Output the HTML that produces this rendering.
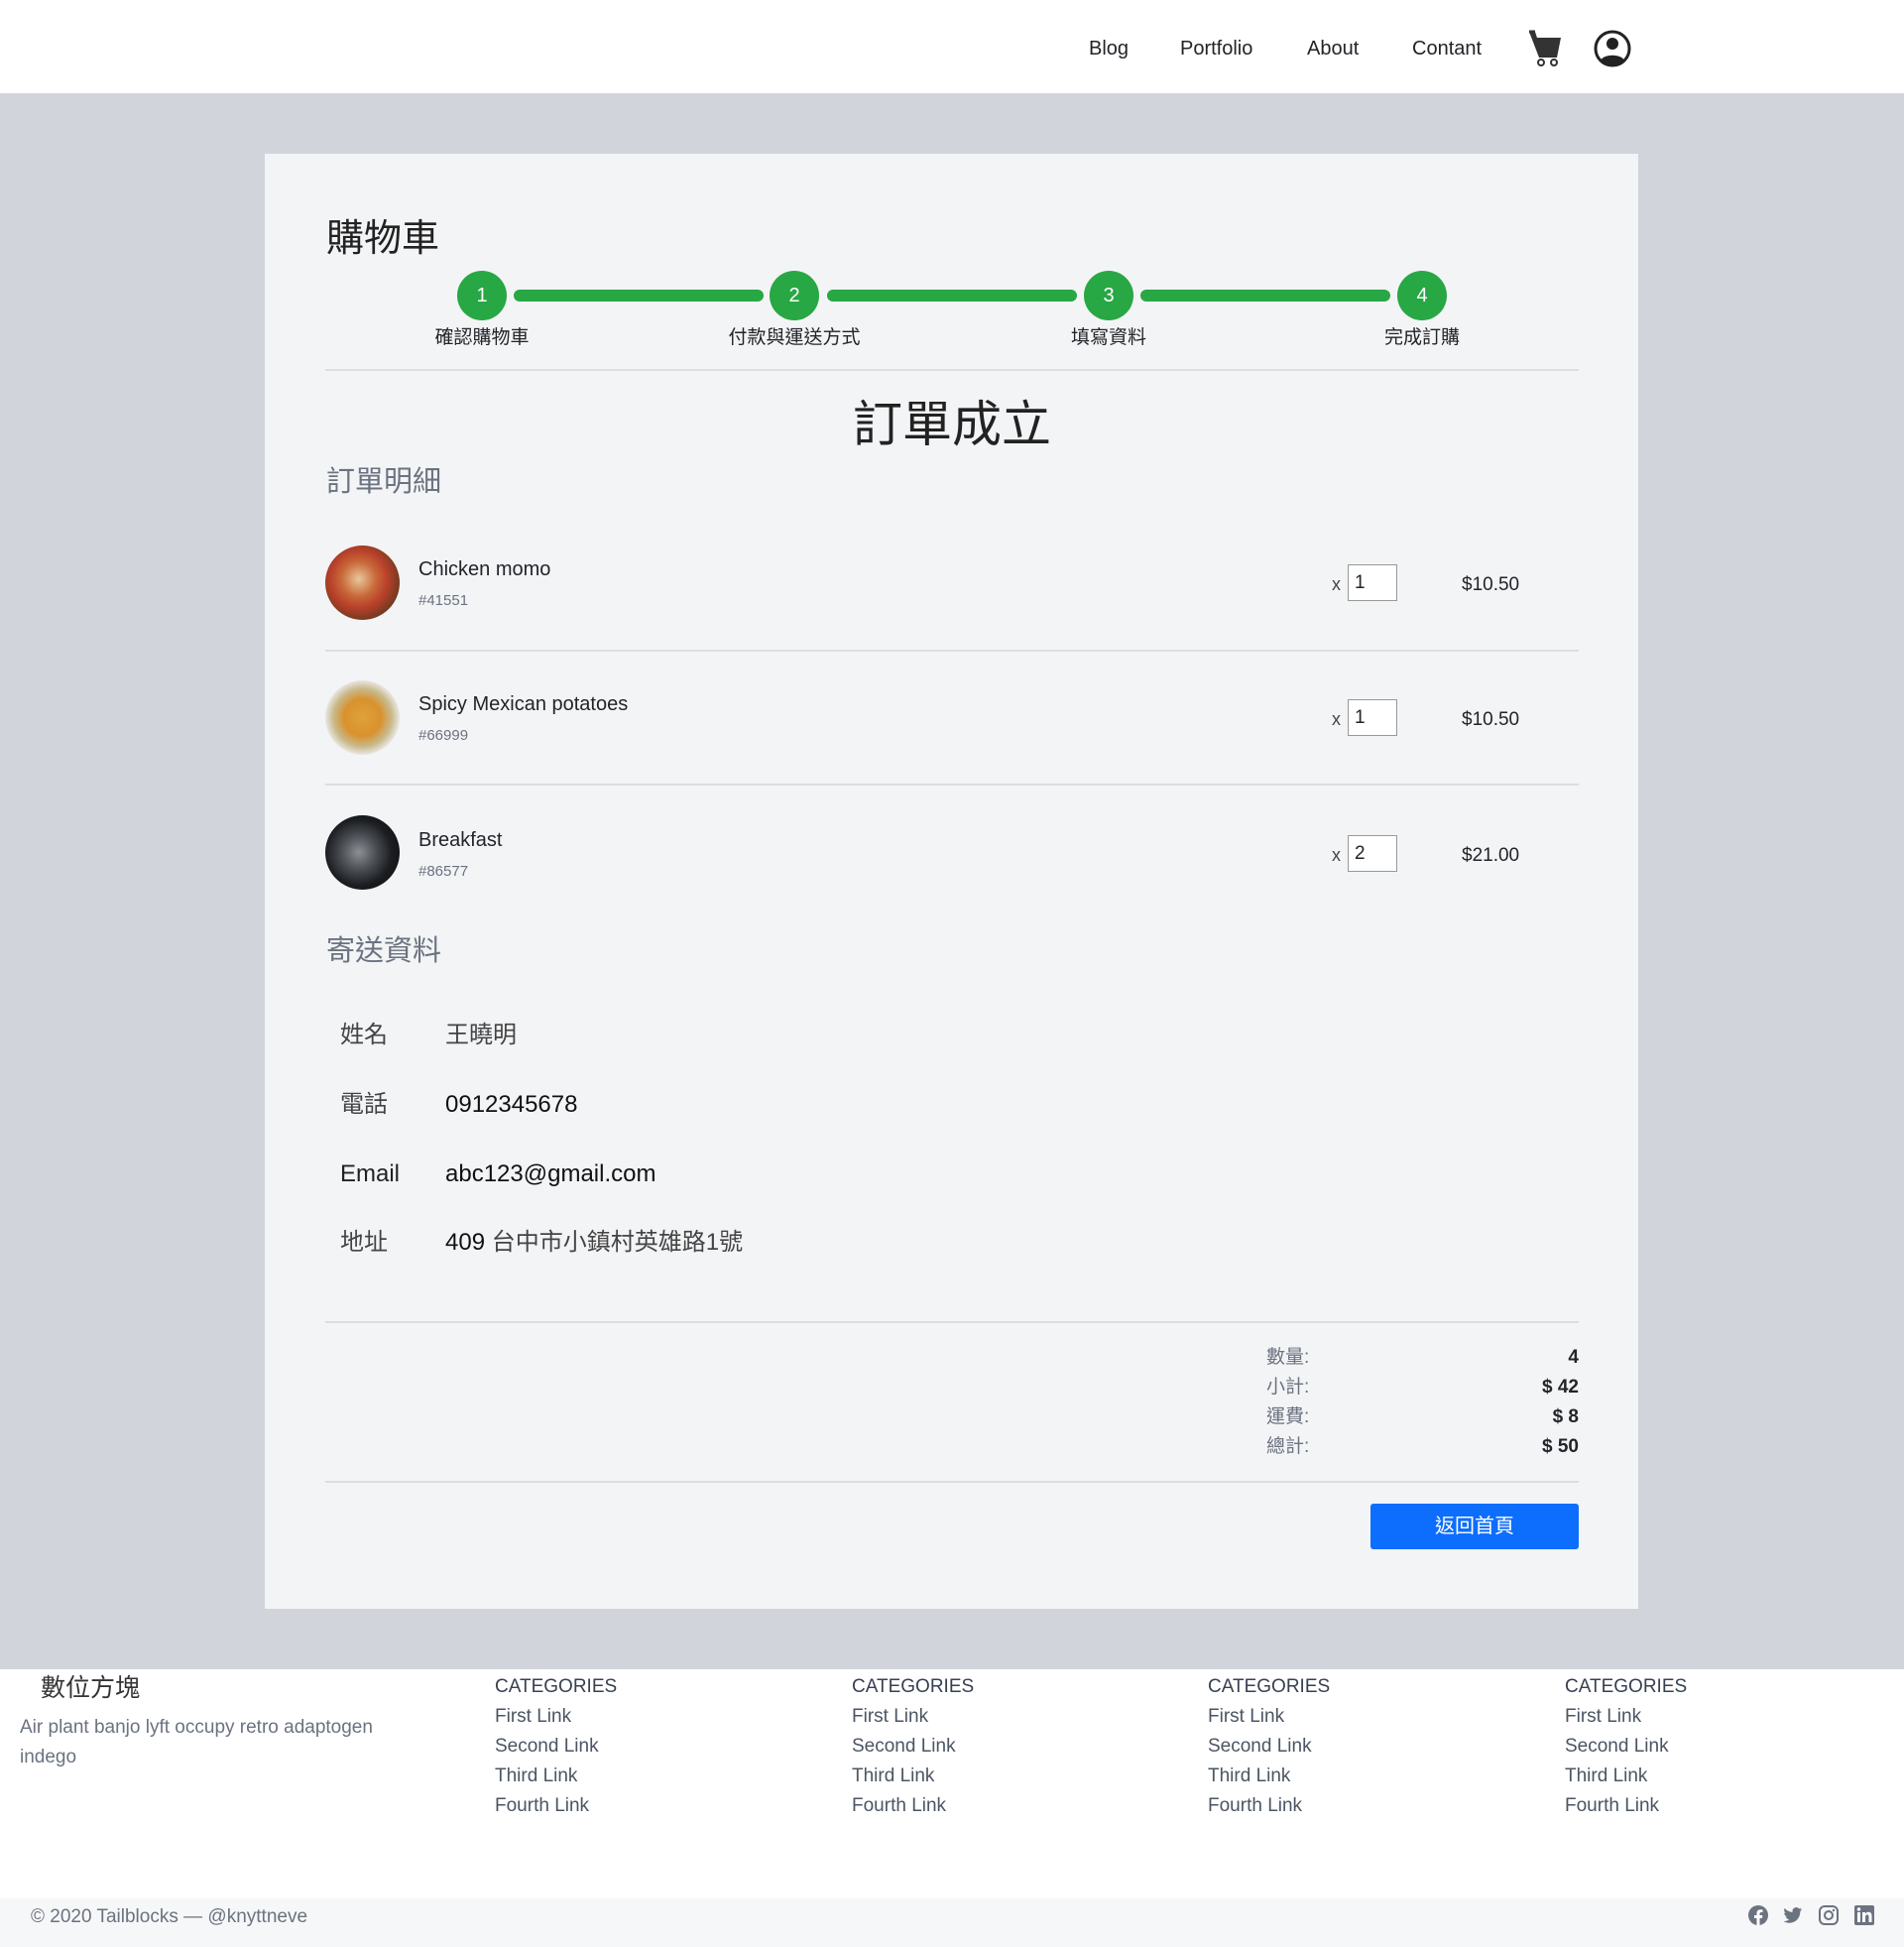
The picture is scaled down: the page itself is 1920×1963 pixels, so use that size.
<!DOCTYPE html>
<html><head><meta charset="utf-8"><style>
*{box-sizing:border-box;margin:0;padding:0}
body{width:1920px;height:1963px;background:#d1d5db;font-family:"Liberation Sans","Noto Sans CJK TC",sans-serif;color:#212529;position:relative;overflow:hidden}
.a{position:absolute;white-space:nowrap}
header{position:absolute;left:0;top:0;width:1920px;height:94px;background:#fff}
.card{position:absolute;left:267px;top:155px;width:1385px;height:1467px;background:#f3f4f6}
.hr{position:absolute;left:328px;width:1264px;height:2px;background:#dcdee2}
.circ{position:absolute;width:50px;height:50px;border-radius:50%;background:#28a745;color:#fff;font-size:20px;text-align:center;line-height:50px;top:273px}
.bar{position:absolute;height:12px;top:292px;background:#28a745;border-radius:6px}
.lbl{position:absolute;top:325px;font-size:19px;transform:translateX(-50%);white-space:nowrap}
.img{position:absolute;left:328px;width:75px;height:75px;border-radius:50%}
.nm{font-size:20px;left:422px}
.cd{font-size:15px;left:422px;color:#6b7280}
.x{font-size:18px;left:1343px;color:#444}
.in{position:absolute;left:1359px;width:50px;height:37px;background:#fff;border:1px solid #999;font-size:19px;padding-left:6px;line-height:35px}
.pr{font-size:19px;left:1474px}
.lb{font-size:24px;left:343px;color:#444;line-height:30px}
.vl{font-size:24px;left:449px;line-height:30px;color:#111}
.sl{font-size:19px;left:1277px;color:#6b7280;line-height:24px}
.sv{font-size:19px;right:328px;font-weight:bold;line-height:24px}
.fh{font-size:19px;color:#374151}
.fl{font-size:19px;color:#4b5563}
</style></head><body>
<header>
<div class="a" style="left:1098px;top:38px;font-size:20px">Blog</div>
<div class="a" style="left:1190px;top:38px;font-size:20px">Portfolio</div>
<div class="a" style="left:1318px;top:38px;font-size:20px">About</div>
<div class="a" style="left:1424px;top:38px;font-size:20px">Contant</div>
<svg class="a" style="left:1540px;top:30px" width="36" height="38" viewBox="0 0 36 38"><path d="M2 2h6l2 6h24l-4 20H12z" fill="#333"/><path d="M2 2h6" stroke="#333" stroke-width="3"/><circle cx="14" cy="33" r="3" fill="none" stroke="#333" stroke-width="2"/><circle cx="27" cy="33" r="3" fill="none" stroke="#333" stroke-width="2"/></svg>
<svg class="a" style="left:1607px;top:30px" width="38" height="38" viewBox="0 0 38 38"><circle cx="19" cy="19" r="17" fill="#fff" stroke="#222" stroke-width="3"/><circle cx="19" cy="14" r="6" fill="#222"/><path d="M7 31c3-7 21-7 24 0a17 17 0 0 1-24 0z" fill="#222"/></svg>
</header>
<div class="card"></div>
<div class="a" style="left:329px;top:209px;font-size:38px;color:#222">購物車</div>
<div class="bar" style="left:518px;width:252px"></div>
<div class="bar" style="left:834px;width:252px"></div>
<div class="bar" style="left:1150px;width:252px"></div>
<div class="circ" style="left:461px">1</div>
<div class="circ" style="left:776px">2</div>
<div class="circ" style="left:1093px">3</div>
<div class="circ" style="left:1409px">4</div>
<div class="lbl" style="left:486px">確認購物車</div>
<div class="lbl" style="left:801px">付款與運送方式</div>
<div class="lbl" style="left:1118px">填寫資料</div>
<div class="lbl" style="left:1434px">完成訂購</div>
<div class="hr" style="top:372px"></div>
<div class="a" style="left:0;width:1920px;text-align:center;top:388px;font-size:50px;color:#222">訂單成立</div>
<div class="a" style="left:329px;top:462px;font-size:29px;color:#6b7280">訂單明細</div>

<div class="img" style="top:550px;background:radial-gradient(circle at 45% 45%,#e9c79a 0,#c8693a 30%,#b8402a 50%,#6a3a1e 75%,#3e2512 100%)"></div>
<div class="a nm" style="top:563px">Chicken momo</div>
<div class="a cd" style="top:597px">#41551</div>
<div class="a x" style="top:579px">x</div><div class="in" style="top:569px">1</div>
<div class="a pr" style="top:579px">$10.50</div>
<div class="hr" style="top:655px"></div>

<div class="img" style="top:686px;background:radial-gradient(circle at 50% 50%,#e0a23a 0,#d9912e 35%,#c8b98a 55%,#e8e4de 70%,#d8d4ce 100%)"></div>
<div class="a nm" style="top:699px">Spicy Mexican potatoes</div>
<div class="a cd" style="top:733px">#66999</div>
<div class="a x" style="top:715px">x</div><div class="in" style="top:705px">1</div>
<div class="a pr" style="top:715px">$10.50</div>
<div class="hr" style="top:790px"></div>

<div class="img" style="top:822px;background:radial-gradient(circle at 45% 50%,#8d8f93 0,#4d5258 30%,#1b1d20 60%,#0a0a0a 100%)"></div>
<div class="a nm" style="top:836px">Breakfast</div>
<div class="a cd" style="top:870px">#86577</div>
<div class="a x" style="top:852px">x</div><div class="in" style="top:842px">2</div>
<div class="a pr" style="top:852px">$21.00</div>

<div class="a" style="left:329px;top:935px;font-size:29px;color:#6b7280">寄送資料</div>
<div class="a lb" style="top:1029px">姓名</div><div class="a vl" style="top:1029px;color:#444">王曉明</div>
<div class="a lb" style="top:1099px">電話</div><div class="a vl" style="top:1099px">0912345678</div>
<div class="a lb" style="top:1169px;color:#222">Email</div><div class="a vl" style="top:1169px">abc123@gmail.com</div>
<div class="a lb" style="top:1238px">地址</div><div class="a vl" style="top:1238px">409 <span style="color:#444">台中市小鎮村英雄路1號</span></div>

<div class="hr" style="top:1332px"></div>
<div class="a sl" style="top:1357px">數量:</div><div class="a sv" style="top:1357px">4</div>
<div class="a sl" style="top:1387px">小計:</div><div class="a sv" style="top:1387px">$ 42</div>
<div class="a sl" style="top:1417px">運費:</div><div class="a sv" style="top:1417px">$ 8</div>
<div class="a sl" style="top:1447px">總計:</div><div class="a sv" style="top:1447px">$ 50</div>
<div class="hr" style="top:1493px"></div>
<div class="a" style="left:1382px;top:1516px;width:210px;height:46px;background:#0d6efd;border-radius:3px;color:#fff;font-size:20px;text-align:center;line-height:46px">返回首頁</div>

<div class="a" style="left:0;top:1683px;width:1920px;height:231px;background:#fff"></div>
<div class="a" style="left:41px;top:1682px;font-size:25px;color:#333">數位方塊</div>
<div class="a" style="left:20px;top:1727px;font-size:19px;color:#6b7280;line-height:30px">Air plant banjo lyft occupy retro adaptogen<br>indego</div>
<div class="a" style="left:499px;top:1686px;line-height:30px"><div class="fh">CATEGORIES</div><div class="fl">First Link</div><div class="fl">Second Link</div><div class="fl">Third Link</div><div class="fl">Fourth Link</div></div>
<div class="a" style="left:859px;top:1686px;line-height:30px"><div class="fh">CATEGORIES</div><div class="fl">First Link</div><div class="fl">Second Link</div><div class="fl">Third Link</div><div class="fl">Fourth Link</div></div>
<div class="a" style="left:1218px;top:1686px;line-height:30px"><div class="fh">CATEGORIES</div><div class="fl">First Link</div><div class="fl">Second Link</div><div class="fl">Third Link</div><div class="fl">Fourth Link</div></div>
<div class="a" style="left:1578px;top:1686px;line-height:30px"><div class="fh">CATEGORIES</div><div class="fl">First Link</div><div class="fl">Second Link</div><div class="fl">Third Link</div><div class="fl">Fourth Link</div></div>
<div class="a" style="left:0;top:1914px;width:1920px;height:49px;background:#f6f7f8"></div>
<div class="a" style="left:31px;top:1922px;font-size:19px;color:#6b7280">© 2020 Tailblocks — @knyttneve</div>
<svg class="a" style="left:1762px;top:1920px" width="130" height="22" viewBox="0 0 130 22" fill="#6b7280">
<circle cx="11" cy="11" r="10"/><path d="M12.5 21v-7h2.5l.4-3h-2.9V9.3c0-.8.3-1.300 1.4-1.3h1.6V5.4c-.3 0-1.2-.1-2.3-.1-2.3 0-3.7 1.4-3.7 3.9V11H7v3h2.5v7z" fill="#fff"/>
<path d="M55 5c-.7.3-1.4.5-2.2.6.8-.5 1.4-1.2 1.7-2.1-.8.4-1.6.8-2.4.9a3.8 3.8 0 0 0-6.5 3.5C42.4 7.700 39.6 6.2 37.7 3.9c-1 1.8-.5 4 1.2 5.1-.6 0-1.2-.2-1.7-.5 0 1.9 1.3 3.5 3.1 3.8-.6.2-1.2.2-1.7.1.5 1.5 1.9 2.6 3.6 2.7A7.7 7.7 0 0 1 36.5 17c1.7 1.1 3.7 1.7 5.8 1.7 7.1 0 11-5.9 11-11v-.5C54 6.6 54.6 5.9 55 5z"/>
<rect x="73" y="2" width="18" height="18" rx="5" fill="none" stroke="#6b7280" stroke-width="2"/><circle cx="82" cy="11" r="4" fill="none" stroke="#6b7280" stroke-width="2"/><circle cx="87" cy="6" r="1.2"/>
<rect x="108" y="1" width="20" height="20" rx="2"/><rect x="111" y="8" width="3" height="10" fill="#fff"/><circle cx="112.5" cy="5" r="1.7" fill="#fff"/><path d="M116 8h3v1.5c.6-1 1.7-1.8 3.2-1.8 2.4 0 3.3 1.5 3.3 4V18h-3v-5.5c0-1.3-.4-2.1-1.5-2.1s-2 .8-2 2.2V18h-3z" fill="#fff"/>
</svg>
</body></html>
